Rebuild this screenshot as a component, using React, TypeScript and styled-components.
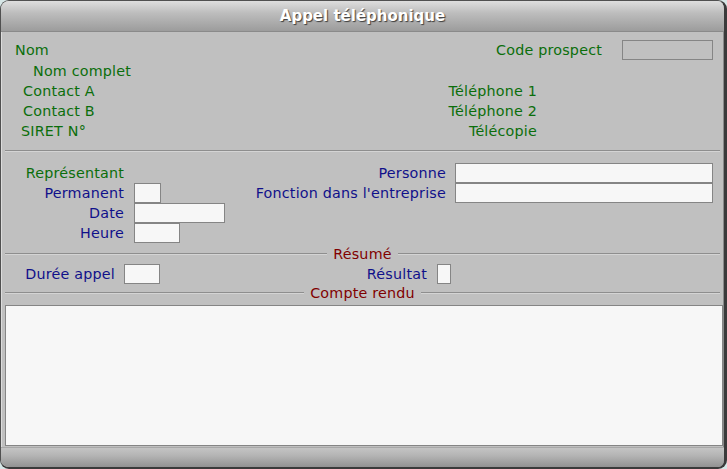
import React from "react";
import styled, { createGlobalStyle } from "styled-components";

const Global = createGlobalStyle`
  html, body { margin: 0; padding: 0; background: #d6e6e6; }
  body { font-family: "DejaVu Sans", Verdana, sans-serif; }
  #root { width: 727px; height: 469px; }
`;

const Window = styled.div`
  width: 727px;
  height: 469px;
  box-sizing: border-box;
  background: #c0c0c0;
  border: 1px solid #505050;
  border-right: 3px solid #3a3a3a;
  border-bottom: 2px solid #3a3a3a;
  border-radius: 9px;
  box-shadow: inset 1px 0 0 #dcdcdc, inset -1px 0 0 #8a8a8a;
  overflow: hidden;
  display: flex;
  flex-direction: column;
  font-size: 14.3px;
  letter-spacing: 0.2px;
`;

const TitleBar = styled.div`
  height: 31px;
  box-sizing: border-box;
  flex: none;
  display: flex;
  align-items: center;
  justify-content: center;
  background: linear-gradient(#dedede, #bdbdbd 40%, #9c9c9c);
  border-bottom: 1px solid #8a8a8a;
  color: #ffffff;
  font-weight: bold;
  font-size: 15px;
  letter-spacing: 0;
  text-shadow: 1px 1px 1px #3c3c3c;
`;

const Body = styled.div`
  flex: 1;
  display: flex;
  flex-direction: column;
  padding-top: 7px;
`;

const TopRow = styled.div<{ $h?: number }>`
  height: ${(p) => p.$h ?? 20}px;
  flex: none;
  display: flex;
  align-items: center;
`;

const Label = styled.span<{ $color: string }>`
  color: ${(p) => p.$color};
  white-space: nowrap;
`;

const LeftLabel = styled(Label)<{ $indent: number }>`
  margin-left: ${(p) => p.$indent}px;
`;

const RightLabel = styled(Label)<{ $end: number }>`
  margin-left: auto;
  margin-right: ${(p) => p.$end}px;
`;

const Field = styled.div<{ $w: number; $disabled?: boolean }>`
  width: ${(p) => p.$w}px;
  height: 20px;
  box-sizing: border-box;
  border: 1px solid #858585;
  background: ${(p) => (p.$disabled ? "#c0c0c0" : "#f7f7f7")};
  flex: none;
`;

const Separator = styled.div`
  flex: none;
  margin: 9px 4px 11px 4px;
  height: 0;
  border-top: 1px solid #8e8e8e;
  border-bottom: 1px solid #d4d4d4;
`;

const Lower = styled.div`
  flex: none;
  display: flex;
  align-items: flex-start;
  padding-right: 11px;
`;

const FormGrid = styled.div<{ $label: string; $gap: number }>`
  display: grid;
  grid-template-columns: ${(p) => p.$label} auto;
  column-gap: ${(p) => p.$gap}px;
  grid-auto-rows: 20px;
  align-items: center;
`;

const RightGrid = styled(FormGrid)`
  margin-left: auto;
`;

const CellLabel = styled(Label)`
  text-align: right;
`;

const Legend = styled.div<{ $top: number }>`
  flex: none;
  display: flex;
  align-items: center;
  gap: 6px;
  height: 16px;
  line-height: 16px;
  margin: ${(p) => p.$top}px 4px 0 4px;
  color: #800000;
  &::before,
  &::after {
    content: "";
    flex: 1;
    height: 0;
    border-top: 1px solid #8e8e8e;
    border-bottom: 1px solid #d4d4d4;
  }
`;

const InlineRow = styled.div`
  flex: none;
  height: 20px;
  display: flex;
  align-items: center;
  margin-top: 2px;
`;

const SizedLabel = styled(Label)<{ $w: number; $gap: number }>`
  width: ${(p) => p.$w}px;
  margin-right: ${(p) => p.$gap}px;
  text-align: right;
  flex: none;
`;

const TextArea = styled.div`
  flex: 1;
  margin: 4px 1px 0 4px;
  box-sizing: border-box;
  background: #f7f7f7;
  border: 1px solid #858585;
`;

const Footer = styled.div`
  height: 19px;
  flex: none;
  margin-top: 1px;
  background: linear-gradient(#c4c4c4, #b4b4b4 40%, #929292);
  border-top: 1px solid #a8a8a8;
`;

const GREEN = "#0b6e0b";
const NAVY = "#10108a";

export default function App() {
  return (
    <>
      <Global />
      <Window>
        <TitleBar>Appel téléphonique</TitleBar>
        <Body>
          <TopRow $h={22}>
            <LeftLabel $color={GREEN} $indent={14}>Nom</LeftLabel>
            <RightLabel $color={GREEN} $end={20}>Code prospect</RightLabel>
            <Field $w={91} $disabled style={{ marginRight: 11 }} />
          </TopRow>
          <TopRow>
            <LeftLabel $color={GREEN} $indent={32}>Nom complet</LeftLabel>
          </TopRow>
          <TopRow>
            <LeftLabel $color={GREEN} $indent={22}>Contact A</LeftLabel>
            <RightLabel $color={GREEN} $end={187}>Téléphone 1</RightLabel>
          </TopRow>
          <TopRow>
            <LeftLabel $color={GREEN} $indent={22}>Contact B</LeftLabel>
            <RightLabel $color={GREEN} $end={187}>Téléphone 2</RightLabel>
          </TopRow>
          <TopRow>
            <LeftLabel $color={GREEN} $indent={20}>SIRET N°</LeftLabel>
            <RightLabel $color={GREEN} $end={187}>Télécopie</RightLabel>
          </TopRow>

          <Separator />

          <Lower>
            <FormGrid $label="123px" $gap={10}>
              <CellLabel $color={GREEN}>Représentant</CellLabel>
              <span />
              <CellLabel $color={NAVY}>Permanent</CellLabel>
              <Field $w={27} />
              <CellLabel $color={NAVY}>Date</CellLabel>
              <Field $w={91} />
              <CellLabel $color={NAVY}>Heure</CellLabel>
              <Field $w={46} />
            </FormGrid>
            <RightGrid $label="auto" $gap={9}>
              <CellLabel $color={NAVY}>Personne</CellLabel>
              <Field $w={258} />
              <CellLabel $color={NAVY}>Fonction dans l'entreprise</CellLabel>
              <Field $w={258} />
            </RightGrid>
          </Lower>

          <Legend $top={3}>Résumé</Legend>
          <InlineRow>
            <SizedLabel $color={NAVY} $w={114} $gap={9}>Durée appel</SizedLabel>
            <Field $w={36} />
            <SizedLabel $color={NAVY} $w={267} $gap={10}>Résultat</SizedLabel>
            <Field $w={14} />
          </InlineRow>
          <Legend $top={1}>Compte rendu</Legend>
          <TextArea />
        </Body>
        <Footer />
      </Window>
    </>
  );
}
